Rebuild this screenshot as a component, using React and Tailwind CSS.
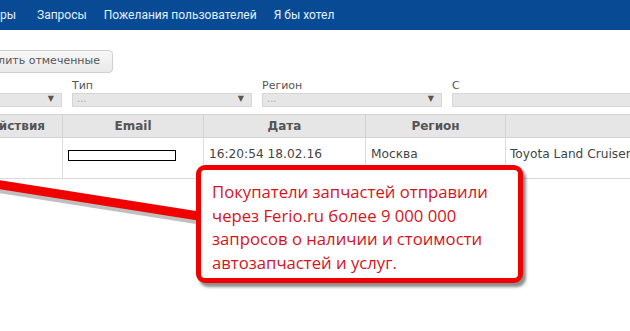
import React from "react";

const verdana = { fontFamily: '"DejaVu Sans", Verdana, sans-serif' };

function Select({ label, width, arrow = true, dots = true }) {
  return (
    <div className="flex flex-col shrink-0" style={{ width }}>
      <span className="h-[15px] text-[11px] leading-[15px] text-[#555]">{label}</span>
      <div className="relative h-[14px] border border-[#d6d6d6] bg-[#e6e6e6]">
        {dots && (
          <span className="absolute left-[4px] top-[-3px] text-[10px] text-[#aaa]">...</span>
        )}
        {arrow && (
          <span className="absolute right-[7px] top-[-1px] text-[8px] text-[#555]">▼</span>
        )}
      </div>
    </div>
  );
}

export default function App() {
  return (
    <div
      className="relative w-[630px] h-[331px] overflow-hidden bg-white"
      style={verdana}
    >
      {/* Top navigation */}
      <nav
        className="flex h-[30px] items-center gap-[17px] bg-[#094a94] text-[12px] text-[#e2f2ff] -ml-[44px]"
        style={{ fontFamily: 'Roboto, sans-serif' }}
      >
        <span className="w-[60px] shrink-0 text-right mr-[4px]">Товары</span>
        <span>Запросы</span>
        <span>Пожелания пользователей</span>
        <span>Я бы хотел</span>
      </nav>

      {/* Actions */}
      <div className="mt-[17px] -ml-[37px]">
        <button className="h-[23px] w-[150px] rounded-[4px] border border-[#cfcfcf] bg-gradient-to-b from-[#f7f7f7] to-[#e9e9e9] pr-[12px] text-right text-[11px] text-[#555]">
          Удалить отмеченные
        </button>
      </div>

      {/* Filters */}
      <div className="mt-[5px] flex gap-[10px] -ml-[118px]">
        <Select label="Статус" width={180} dots={false} />
        <Select label="Тип" width={180} />
        <Select label="Регион" width={180} />
        <Select label="С" width={200} arrow={false} dots={false} />
      </div>

      {/* Table */}
      <table
        className="mt-[7px] -ml-[38px] w-[703px] table-fixed border-collapse text-[12.2px] text-[#444]"
      >
        <colgroup>
          <col className="w-[100px]" />
          <col className="w-[141px]" />
          <col className="w-[162px]" />
          <col className="w-[140px]" />
          <col className="w-[160px]" />
        </colgroup>
        <thead>
          <tr className="h-[23px] bg-[#e6e6e6] text-[12px] font-bold text-[#555]">
            <th className="border border-[#d2d2d2]">Действия</th>
            <th className="border border-[#d2d2d2]">Email</th>
            <th className="border border-[#d2d2d2]">Дата</th>
            <th className="border border-[#d2d2d2]">Регион</th>
            <th className="border border-[#d2d2d2]"></th>
          </tr>
        </thead>
        <tbody>
          <tr className="h-[41px] align-top">
            <td className="border border-[#dcdcdc]"></td>
            <td className="border border-[#dcdcdc] pl-[5px] pt-[12px]">
              <div className="h-[11px] w-[108px] border border-black bg-white"></div>
            </td>
            <td className="border border-[#dcdcdc] pl-[5px] pt-[7px] whitespace-nowrap">16:20:54 18.02.16</td>
            <td className="border border-[#dcdcdc] pl-[5px] pt-[7px]">Москва</td>
            <td className="border border-[#dcdcdc] pl-[4px] pt-[7px] whitespace-nowrap">Toyota Land Cruiser</td>
          </tr>
        </tbody>
      </table>

      {/* Pointer line */}
      <svg className="absolute left-0 top-0" width="630" height="331">
        <line x1="-5" y1="186" x2="205" y2="219" stroke="#000" strokeOpacity="0.25" strokeWidth="9" transform="translate(1 2)" />
        <line x1="-5" y1="184" x2="205" y2="217" stroke="#f10000" strokeWidth="9" />
      </svg>

      {/* Callout */}
      <div
        className="absolute left-[196px] top-[165px] w-[327px] h-[118px] rounded-[9px] border-[5px] border-[#f10000] bg-white pl-[11px] pt-[10px] text-[16.7px] leading-[23.5px] text-[#d4141c] shadow-[3px_4px_3px_rgba(0,0,0,0.45)]"
        style={{ fontFamily: '"Open Sans", sans-serif' }}
      >
        Покупатели запчастей отправили
        <br />
        через Ferio.ru более 9 000 000
        <br />
        запросов о наличии и стоимости
        <br />
        автозапчастей и услуг.
      </div>
    </div>
  );
}
